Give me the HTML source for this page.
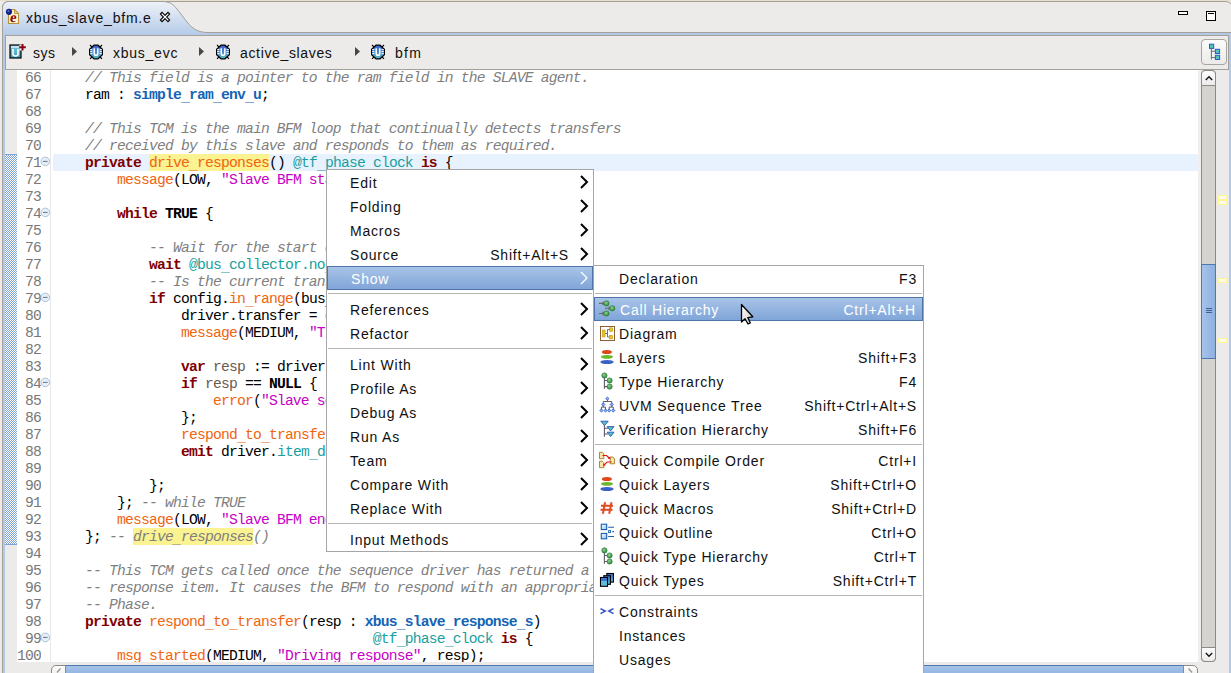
<!DOCTYPE html>
<html><head><meta charset="utf-8">
<style>
*{margin:0;padding:0;box-sizing:border-box}
html,body{width:1231px;height:673px;overflow:hidden;background:#ecebe9;font-family:"Liberation Sans",sans-serif;position:relative}
.a{position:absolute}
/* code */
#code{position:absolute;left:53px;top:69px;width:1145px;height:593px;overflow:hidden;font-family:"Liberation Mono",monospace;font-size:14.667px;letter-spacing:-0.8px;line-height:17px;color:#000}
#code div{height:17px;padding-top:1px;white-space:pre}
#nums{position:absolute;left:17px;top:69px;width:24px;height:593px;overflow:hidden;font-family:"Liberation Mono",monospace;font-size:14.667px;letter-spacing:-0.8px;line-height:17px;white-space:pre;color:#787878;text-align:right}
#nums div{height:17px;padding-top:1px}
.c{color:#7f7f7f;font-style:italic}
.k{color:#7f0000;font-weight:bold}
.b{font-weight:bold}
.t{color:#1464b4;font-weight:bold}
.m{color:#f0640e}
.s{color:#c800c8}
.e{color:#18a0a0}
.v{color:#6a5a50}
.hl{background:#fbf291;padding-top:1px}
.u{font-style:inherit;position:relative;top:2px}
/* menus */
.menu{position:absolute;background:#fff;border:1px solid #a6a6a6;font-size:14px;letter-spacing:0.8px;color:#101010}
.mi{position:absolute;left:0;right:0;height:24px;line-height:24px}
.mi .l{position:absolute;left:23px;top:1px}
.mi .r{position:absolute;right:24px;top:1px}
.sep{position:absolute;left:1px;right:1px;height:1px;background:#b4b4b4}
.sel{background:linear-gradient(#a8c4e8,#80a5d8);border:1px solid #4f74a8;color:#fff;line-height:22px}
.chev{position:absolute;left:253px;top:5px}
</style></head><body>

<!-- tab bar -->
<div class="a" style="left:0;top:0;width:1231px;height:1px;background:#e6e0cc"></div>
<svg class="a" style="left:0;top:0" width="1231" height="36">
  <defs>
    <linearGradient id="tabg" x1="0" y1="0" x2="0" y2="1">
      <stop offset="0" stop-color="#eef2f9"/>
      <stop offset="1" stop-color="#b3c9e7"/>
    </linearGradient>
  </defs>
  <path d="M2.5,36 L2.5,8 Q2.5,1.5 9,1.5 L1225,1.5 Q1232.5,1.5 1232.5,9 L1232.5,36" fill="#ecebe9" stroke="#a39f99" stroke-width="1"/>
  
  <rect x="3" y="33" width="1228" height="3" fill="#b3c9e7"/>
  <path d="M2.5,36 L2.5,8 Q2.5,1.5 9,1.5 L162,1.5 C169,1.5 173,4 177,9 L187,22 C193,29.5 199,32.5 208,32.5 L207,36 Z" fill="url(#tabg)"/>
  <path d="M2.5,36 L2.5,8 Q2.5,1.5 9,1.5 L162,1.5 C169,1.5 173,4 177,9 L187,22 C193,29.5 199,32.5 208,32.5 L1231,32.5" fill="none" stroke="#a39f99" stroke-width="1"/>
</svg>
<!-- tab icon -->
<svg class="a" style="left:4px;top:6px" width="18" height="20" viewBox="0 0 18 20">
  <path d="M4.5,3.5 L10.5,3.5 L14.5,7.5 L14.5,17.5 L4.5,17.5 Z" fill="#fdf4cf" stroke="#b8923a" stroke-width="1.1"/>
  <path d="M10.5,3.5 L10.5,7.5 L14.5,7.5 Z" fill="#e9cf8a" stroke="#b8923a" stroke-width="0.9"/>
  <text x="5.6" y="16.2" font-family="Liberation Serif" font-weight="bold" font-size="14.5" fill="#880606" transform="skewX(-8) translate(2.2,0)">e</text>
  <circle cx="5" cy="5.8" r="3.1" fill="#10208a"/>
  <circle cx="4.4" cy="5.2" r="1.1" fill="#6070b0"/>
</svg>
<div class="a" style="left:26px;top:10px;font-size:14px;letter-spacing:0.8px;color:#101010">xbus_slave_bfm.e</div>
<!-- close x -->
<svg class="a" style="left:158px;top:10px" width="14" height="14" viewBox="0 0 14 14">
  <path d="M4,4 L10,10 M10,4 L4,10" stroke="#000" stroke-width="3.4" stroke-linecap="square"/>
  <path d="M4,4 L10,10 M10,4 L4,10" stroke="#fff" stroke-width="1.2" stroke-linecap="square"/>
</svg>
<!-- min / max -->
<div class="a" style="left:1178px;top:11px;width:10px;height:4px;border:1.5px solid #000;background:#fff"></div>
<div class="a" style="left:1206px;top:11px;width:10px;height:10px;border:1.5px solid #000;background:#fff;box-shadow:inset 0 2px 0 -0.5px #fff"></div>
<div class="a" style="left:1208px;top:13px;width:6px;height:1px;background:#000"></div>

<!-- frame left/right -->
<div class="a" style="left:2px;top:8px;width:1px;height:665px;background:#a39f99"></div>
<div class="a" style="left:3px;top:33px;width:2px;height:640px;background:#b3c9e7"></div>
<div class="a" style="left:1229px;top:33px;width:2px;height:640px;background:#b3c9e7"></div>

<!-- breadcrumb -->
<div class="a" style="left:5px;top:35px;width:1224px;height:35px;border:1px solid #a39f99;background:#ecebe9"></div>
<svg class="a" style="left:8px;top:43px" width="18" height="17" viewBox="0 0 18 17">
  <defs><linearGradient id="ug" x1="0" y1="0" x2="0" y2="1"><stop offset="0" stop-color="#7fc8e0"/><stop offset="1" stop-color="#3c9ab8"/></linearGradient></defs>
  <rect x="2" y="2" width="11" height="13" fill="url(#ug)" stroke="#000" stroke-width="1.2"/>
  <rect x="3" y="3" width="9" height="2" fill="#bfe3ef"/>
  <path d="M5,6 L5,11 Q5,13 7.5,13 Q10,13 10,11 L10,6" fill="none" stroke="#fff" stroke-width="1.6"/>
  <rect x="11.5" y="1.5" width="6.5" height="6" fill="#ecebe9"/>
  <path d="M14.5,1 L14.5,7.5 M11.2,4.2 L17.8,4.2" stroke="#8a0010" stroke-width="2"/>
</svg>
<svg width="0" height="0" style="position:absolute"><defs><linearGradient id="bg1" x1="0" y1="0" x2="0" y2="1"><stop offset="0" stop-color="#3a5fd2"/><stop offset="1" stop-color="#5cbcc6"/></linearGradient></defs></svg>
<div class="a" style="left:33px;top:44.5px;font-size:14px;letter-spacing:0.5px;color:#101010">sys</div>

<svg class="a" style="left:72px;top:47px" width="6" height="10"><path d="M0,0 L5,4.5 L0,9 Z" fill="#474747"/></svg>
<svg class="a" style="left:199px;top:47px" width="6" height="10"><path d="M0,0 L5,4.5 L0,9 Z" fill="#474747"/></svg>
<svg class="a" style="left:355px;top:47px" width="6" height="10"><path d="M0,0 L5,4.5 L0,9 Z" fill="#474747"/></svg>

<svg class="a" style="left:88px;top:44px" width="16" height="16" viewBox="0 0 16 16">
  <path d="M2,1 L4.8,3.8 M14,1 L11.2,3.8 M2,14.8 L4.8,12 M14,14.8 L11.2,12" stroke="#000" stroke-width="1.1"/>
  <path d="M6,1.2 L10,1.2 L13,4 L14.4,5.2 L14.4,10.8 L13,12 L10,14.8 L6,14.8 L3,12 L1.6,10.8 L1.6,5.2 L3,4 Z" fill="url(#bg1)" stroke="#000" stroke-width="1.2"/>
  <path d="M2.2,5.6 L4.4,5.6 M2.2,7.6 L4.4,7.6 M2.2,9.6 L4.4,9.6 M11.6,5.6 L13.8,5.6 M11.6,7.6 L13.8,7.6 M11.6,9.6 L13.8,9.6" stroke="#fff" stroke-width="1"/>
  <path d="M6.2,4.3 L6.2,9.2 Q6.2,11.3 8,11.3 Q9.8,11.3 9.8,9.2 L9.8,4.3" fill="none" stroke="#fff" stroke-width="1.5"/>
</svg>
<div class="a" style="left:113px;top:44.5px;font-size:14px;letter-spacing:0.75px;color:#101010">xbus_evc</div>
<svg class="a" style="left:215px;top:44px" width="16" height="16" viewBox="0 0 16 16">
  <path d="M2,1 L4.8,3.8 M14,1 L11.2,3.8 M2,14.8 L4.8,12 M14,14.8 L11.2,12" stroke="#000" stroke-width="1.1"/>
  <path d="M6,1.2 L10,1.2 L13,4 L14.4,5.2 L14.4,10.8 L13,12 L10,14.8 L6,14.8 L3,12 L1.6,10.8 L1.6,5.2 L3,4 Z" fill="url(#bg1)" stroke="#000" stroke-width="1.2"/>
  <path d="M2.2,5.6 L4.4,5.6 M2.2,7.6 L4.4,7.6 M2.2,9.6 L4.4,9.6 M11.6,5.6 L13.8,5.6 M11.6,7.6 L13.8,7.6 M11.6,9.6 L13.8,9.6" stroke="#fff" stroke-width="1"/>
  <path d="M6.2,4.3 L6.2,9.2 Q6.2,11.3 8,11.3 Q9.8,11.3 9.8,9.2 L9.8,4.3" fill="none" stroke="#fff" stroke-width="1.5"/>
</svg>
<div class="a" style="left:240px;top:44.5px;font-size:14px;letter-spacing:0.65px;color:#101010">active_slaves</div>
<svg class="a" style="left:370px;top:44px" width="16" height="16" viewBox="0 0 16 16">
  <path d="M2,1 L4.8,3.8 M14,1 L11.2,3.8 M2,14.8 L4.8,12 M14,14.8 L11.2,12" stroke="#000" stroke-width="1.1"/>
  <path d="M6,1.2 L10,1.2 L13,4 L14.4,5.2 L14.4,10.8 L13,12 L10,14.8 L6,14.8 L3,12 L1.6,10.8 L1.6,5.2 L3,4 Z" fill="url(#bg1)" stroke="#000" stroke-width="1.2"/>
  <path d="M2.2,5.6 L4.4,5.6 M2.2,7.6 L4.4,7.6 M2.2,9.6 L4.4,9.6 M11.6,5.6 L13.8,5.6 M11.6,7.6 L13.8,7.6 M11.6,9.6 L13.8,9.6" stroke="#fff" stroke-width="1"/>
  <path d="M6.2,4.3 L6.2,9.2 Q6.2,11.3 8,11.3 Q9.8,11.3 9.8,9.2 L9.8,4.3" fill="none" stroke="#fff" stroke-width="1.5"/>
</svg>
<div class="a" style="left:395px;top:44.5px;font-size:14px;letter-spacing:1.3px;color:#101010">bfm</div>

<!-- breadcrumb right button -->
<div class="a" style="left:1201px;top:39px;width:26px;height:26px;border:1px solid #a8a49e;border-radius:4px;background:linear-gradient(#fbfbfa,#ecebe9)"></div>
<svg class="a" style="left:1205px;top:42px" width="18" height="20" viewBox="0 0 18 20">
  <path d="M6.4,6.5 L6.4,17.5 M6.4,9.3 L10.5,9.3 M6.4,15.5 L10.5,15.5" stroke="#6a7482" stroke-width="1.1"/>
  <rect x="4.5" y="2.2" width="4.2" height="4.2" fill="#52c2b4" stroke="#2f58d0" stroke-width="1"/>
  <rect x="10.4" y="7.3" width="4.2" height="4.2" fill="#52c2b4" stroke="#2f58d0" stroke-width="1"/>
  <rect x="10.4" y="13.3" width="4.2" height="4.2" fill="#52c2b4" stroke="#2f58d0" stroke-width="1"/>
</svg>

<!-- editor -->
<div class="a" style="left:5px;top:70px;width:12px;height:592px;background:#ecebe9"></div>
<svg class="a" style="left:5px;top:154px" width="12" height="391">
  <defs><pattern id="dots" width="2" height="2" patternUnits="userSpaceOnUse"><rect width="2" height="2" fill="#ffffff"/><rect width="1" height="1" fill="#7ea3d8"/><rect x="1" y="1" width="1" height="1" fill="#7ea3d8"/></pattern></defs>
  <rect width="12" height="391" fill="url(#dots)"/>
  <rect width="12" height="1" fill="#7ea3d8"/><rect y="390" width="12" height="1" fill="#7ea3d8"/>
</svg>
<div class="a" style="left:17px;top:70px;width:1181px;height:592px;background:#fff"></div>
<div class="a" style="left:50px;top:70px;width:1px;height:592px;background:#e8e8e8"></div>
<div class="a" style="left:53px;top:154px;width:1145px;height:17px;background:#e8f2fe"></div>

<div id="nums"><div>66</div><div>67</div><div>68</div><div>69</div><div>70</div><div>71</div><div>72</div><div>73</div><div>74</div><div>75</div><div>76</div><div>77</div><div>78</div><div>79</div><div>80</div><div>81</div><div>82</div><div>83</div><div>84</div><div>85</div><div>86</div><div>87</div><div>88</div><div>89</div><div>90</div><div>91</div><div>92</div><div>93</div><div>94</div><div>95</div><div>96</div><div>97</div><div>98</div><div>99</div><div>100</div></div>

<!-- fold icons -->
<svg class="a" style="left:40px;top:69px" width="11" height="593">
  <g fill="#e6eff8" stroke="#a8bccf" stroke-width="0.9"><circle cx="5.3" cy="92.4" r="4.3"/><circle cx="5.3" cy="143.4" r="4.3"/><circle cx="5.3" cy="228.4" r="4.3"/><circle cx="5.3" cy="313.4" r="4.3"/><circle cx="5.3" cy="568.4" r="4.3"/></g>
  <path d="M3,92.4 L7.6,92.4 M3,143.4 L7.6,143.4 M3,228.4 L7.6,228.4 M3,313.4 L7.6,313.4 M3,568.4 L7.6,568.4" stroke="#61778c" stroke-width="1"/>
</svg>

<div id="code">
<div>    <span class="c">// This field is a pointer to the ram field in the SLAVE agent.</span></div>
<div>    ram : <span class="t">simple<i class="u">_</i>ram<i class="u">_</i>env<i class="u">_</i>u</span>;</div>
<div> </div>
<div>    <span class="c">// This TCM is the main BFM loop that continually detects transfers</span></div>
<div>    <span class="c">// received by this slave and responds to them as required.</span></div>
<div>    <span class="k">private</span> <span class="m hl">drive<i class="u">_</i>responses</span>() <span class="e">@tf<i class="u">_</i>phase<i class="u">_</i>clock</span> <span class="k">is</span> {</div>
<div>        <span class="m">message</span>(LOW, <span class="s">"Slave BFM started"</span>);</div>
<div> </div>
<div>        <span class="k">while</span> <span class="b">TRUE</span> {</div>
<div> </div>
<div>            <span class="c">-- Wait for the start of a transfer</span></div>
<div>            <span class="k">wait</span> <span class="e">@bus<i class="u">_</i>collector.no<i class="u">_</i>transfer</span>;</div>
<div>            <span class="c">-- Is the current transfer for us?</span></div>
<div>            <span class="k">if</span> config.<span class="m">in<i class="u">_</i>range</span>(bus<i class="u">_</i>collector.transfer.addr) {</div>
<div>                driver.transfer = <span class="m">copy</span>();</div>
<div>                <span class="m">message</span>(MEDIUM, <span class="s">"Transfer"</span>);</div>
<div> </div>
<div>                <span class="k">var</span> <span class="v">resp</span> := driver.get<i class="u">_</i>response();</div>
<div>                <span class="k">if</span> <span class="v">resp</span> == <span class="b">NULL</span> {</div>
<div>                    <span class="m">error</span>(<span class="s">"Slave sequence"</span>);</div>
<div>                };</div>
<div>                <span class="m">respond<i class="u">_</i>to<i class="u">_</i>transfer</span>(resp);</div>
<div>                <span class="k">emit</span> driver.<span class="e">item<i class="u">_</i>done</span>;</div>
<div> </div>
<div>            };</div>
<div>        }; <span class="c">-- while TRUE</span></div>
<div>        <span class="m">message</span>(LOW, <span class="s">"Slave BFM ended"</span>);</div>
<div>    }; <span class="c">-- <span class="hl">drive<i class="u">_</i>responses</span>()</span></div>
<div> </div>
<div>    <span class="c">-- This TCM gets called once the sequence driver has returned a</span></div>
<div>    <span class="c">-- response item. It causes the BFM to respond with an appropriate</span></div>
<div>    <span class="c">-- Phase.</span></div>
<div>    <span class="k">private</span> <span class="m">respond<i class="u">_</i>to<i class="u">_</i>transfer</span>(resp : <span class="t">xbus<i class="u">_</i>slave<i class="u">_</i>response<i class="u">_</i>s</span>)</div>
<div>                                        <span class="e">@tf<i class="u">_</i>phase<i class="u">_</i>clock</span> <span class="k">is</span> {</div>
<div>        <span class="m">msg<i class="u">_</i>started</span>(MEDIUM, <span class="s">"Driving response"</span>, resp);</div>
</div>

<!-- vertical scrollbar -->
<div class="a" style="left:1198px;top:70px;width:3px;height:592px;background:#f0efee"></div>
<div class="a" style="left:1216px;top:70px;width:13px;height:603px;background:#ecebe9"></div>
<div class="a" style="left:1201px;top:70px;width:15px;height:592px;background:#d5d3d0;border:1px solid #8e8a86;border-radius:4px"></div>
<div class="a" style="left:1201px;top:70px;width:15px;height:16px;background:linear-gradient(#fdfdfd,#ecebea);border:1px solid #8e8a86;border-radius:4px 4px 0 0"></div>
<svg class="a" style="left:1204px;top:74px" width="10" height="8"><path d="M1.8,6 L5,2.8 L8.2,6" fill="none" stroke="#1a1a1a" stroke-width="1.5"/></svg>
<div class="a" style="left:1201px;top:647px;width:15px;height:15px;background:linear-gradient(#fdfdfd,#ecebea);border:1px solid #8e8a86;border-radius:0 0 4px 4px"></div>
<svg class="a" style="left:1204px;top:651px" width="10" height="8"><path d="M1.8,2 L5,5.2 L8.2,2" fill="none" stroke="#1a1a1a" stroke-width="1.5"/></svg>
<div class="a" style="left:1201px;top:264px;width:15px;height:95px;background:linear-gradient(90deg,#a6c3ea,#8eb1e0);border:1px solid #4f78ad"></div>
<div class="a" style="left:1206px;top:308px;width:6px;height:1px;background:#3f5f8f"></div>
<div class="a" style="left:1206px;top:310px;width:6px;height:1px;background:#3f5f8f"></div>
<div class="a" style="left:1206px;top:312px;width:6px;height:1px;background:#3f5f8f"></div>
<!-- overview markers -->
<div class="a" style="left:1218px;top:195px;width:9px;height:5px;border:1.5px solid #fcf49a;background:#fffbe6"></div>
<div class="a" style="left:1218px;top:200px;width:9px;height:5px;border:1.5px solid #fcf49a;background:#fffbe6"></div>
<div class="a" style="left:1218px;top:278px;width:9px;height:5px;border:1.5px solid #fcf49a;background:#fffbe6"></div>
<div class="a" style="left:1218px;top:338px;width:9px;height:5px;border:1.5px solid #fcf49a;background:#fffbe6"></div>

<!-- horizontal scrollbar -->
<div class="a" style="left:64px;top:665px;width:1121px;height:12px;background:linear-gradient(#a6c3ea,#8eb1e0);border:1px solid #4f78ad"></div>
<div class="a" style="left:51px;top:665px;width:15px;height:12px;background:linear-gradient(#fdfdfd,#efeeed);border:1px solid #8e8a86;border-radius:5px 0 0 0"></div>
<div class="a" style="left:1183px;top:665px;width:15px;height:12px;background:linear-gradient(#fdfdfd,#efeeed);border:1px solid #8e8a86;border-radius:0 5px 0 0"></div>
<svg class="a" style="left:51px;top:665px" width="15" height="8"><path d="M9.5,3.5 L6,7.5" stroke="#9a9896" stroke-width="1.3" fill="none"/></svg>
<svg class="a" style="left:1183px;top:665px" width="15" height="8"><path d="M5.5,3.5 L9,7.5" stroke="#9a9896" stroke-width="1.3" fill="none"/></svg>

<!-- main context menu -->
<div class="menu" style="left:326px;top:169px;width:268px;height:383px">
  <div class="mi" style="top:0"><span class="l">Edit</span></div>
  <div class="mi" style="top:24px"><span class="l">Folding</span></div>
  <div class="mi" style="top:48px"><span class="l">Macros</span></div>
  <div class="mi" style="top:72px"><span class="l">Source</span><span class="r">Shift+Alt+S</span></div>
  <div class="mi sel" style="top:96px"><span class="l">Show</span></div>
  <div class="sep" style="top:123px"></div>
  <div class="mi" style="top:127px"><span class="l">References</span></div>
  <div class="mi" style="top:151px"><span class="l">Refactor</span></div>
  <div class="sep" style="top:178px"></div>
  <div class="mi" style="top:182px"><span class="l">Lint With</span></div>
  <div class="mi" style="top:206px"><span class="l">Profile As</span></div>
  <div class="mi" style="top:230px"><span class="l">Debug As</span></div>
  <div class="mi" style="top:254px"><span class="l">Run As</span></div>
  <div class="mi" style="top:278px"><span class="l">Team</span></div>
  <div class="mi" style="top:302px"><span class="l">Compare With</span></div>
  <div class="mi" style="top:326px"><span class="l">Replace With</span></div>
  <div class="sep" style="top:353px"></div>
  <div class="mi" style="top:357px"><span class="l">Input Methods</span></div>
</div>
<svg class="a" style="left:326px;top:169px" width="269" height="384">
  <g fill="none" stroke="#000" stroke-width="2">
    <path d="M255,7 L261,13 L255,19"/>
    <path d="M255,31 L261,37 L255,43"/>
    <path d="M255,55 L261,61 L255,67"/>
    <path d="M255,79 L261,85 L255,91"/>
    <path d="M255,134 L261,140 L255,146"/>
    <path d="M255,158 L261,164 L255,170"/>
    <path d="M255,189 L261,195 L255,201"/>
    <path d="M255,213 L261,219 L255,225"/>
    <path d="M255,237 L261,243 L255,249"/>
    <path d="M255,261 L261,267 L255,273"/>
    <path d="M255,285 L261,291 L255,297"/>
    <path d="M255,309 L261,315 L255,321"/>
    <path d="M255,333 L261,339 L255,345"/>
    <path d="M255,364 L261,370 L255,376"/>
  </g>
  <path d="M255,103 L261,109 L255,115" fill="none" stroke="#fff" stroke-width="1.3"/>
</svg>

<!-- submenu -->
<div class="menu" style="left:593px;top:265px;width:331px;height:420px">
  <div class="mi" style="top:0"><span class="l" style="left:25px">Declaration</span><span class="r" style="right:6px">F3</span></div>
  <div class="sep" style="top:27px"></div>
  <div class="mi sel" style="top:31px"><span class="l" style="left:25px">Call Hierarchy</span><span class="r" style="right:6px">Ctrl+Alt+H</span></div>
  <div class="mi" style="top:55px"><span class="l" style="left:25px">Diagram</span></div>
  <div class="mi" style="top:79px"><span class="l" style="left:25px">Layers</span><span class="r" style="right:6px">Shift+F3</span></div>
  <div class="mi" style="top:103px"><span class="l" style="left:25px">Type Hierarchy</span><span class="r" style="right:6px">F4</span></div>
  <div class="mi" style="top:127px"><span class="l" style="left:25px">UVM Sequence Tree</span><span class="r" style="right:6px">Shift+Ctrl+Alt+S</span></div>
  <div class="mi" style="top:151px"><span class="l" style="left:25px">Verification Hierarchy</span><span class="r" style="right:6px">Shift+F6</span></div>
  <div class="sep" style="top:178px"></div>
  <div class="mi" style="top:182px"><span class="l" style="left:25px">Quick Compile Order</span><span class="r" style="right:6px">Ctrl+I</span></div>
  <div class="mi" style="top:206px"><span class="l" style="left:25px">Quick Layers</span><span class="r" style="right:6px">Shift+Ctrl+O</span></div>
  <div class="mi" style="top:230px"><span class="l" style="left:25px">Quick Macros</span><span class="r" style="right:6px">Shift+Ctrl+D</span></div>
  <div class="mi" style="top:254px"><span class="l" style="left:25px">Quick Outline</span><span class="r" style="right:6px">Ctrl+O</span></div>
  <div class="mi" style="top:278px"><span class="l" style="left:25px">Quick Type Hierarchy</span><span class="r" style="right:6px">Ctrl+T</span></div>
  <div class="mi" style="top:302px"><span class="l" style="left:25px">Quick Types</span><span class="r" style="right:6px">Shift+Ctrl+T</span></div>
  <div class="sep" style="top:329px"></div>
  <div class="mi" style="top:333px"><span class="l" style="left:25px">Constraints</span></div>
  <div class="mi" style="top:357px"><span class="l" style="left:25px">Instances</span></div>
  <div class="mi" style="top:381px"><span class="l" style="left:25px">Usages</span></div>
</div>


<!-- submenu icons -->
<svg class="a" style="left:594px;top:265px" width="329" height="408">
<defs>
  <radialGradient id="gc" cx="0.4" cy="0.35" r="0.65"><stop offset="0" stop-color="#8fd08f"/><stop offset="1" stop-color="#2f8f3f"/></radialGradient>
  <linearGradient id="qt" x1="0" y1="0" x2="0" y2="1"><stop offset="0" stop-color="#3a6fd0"/><stop offset="1" stop-color="#5cc3dc"/></linearGradient>
  <linearGradient id="ol" x1="0" y1="0" x2="1" y2="1"><stop offset="0" stop-color="#ffffff"/><stop offset="1" stop-color="#8cc4f0"/></linearGradient>
</defs>
<g transform="translate(-594,-265)">
  <!-- call hierarchy -->
  <g stroke="#6a6a6a" stroke-width="1.1" fill="none">
    <path d="M599,303.4 L604,303.4 M605,308.3 L610,308.3 M599,313.5 L604,313.5"/>
    <path d="M602.5,301.8 L604,303.4 L602.5,305 M608.5,306.7 L610,308.3 L608.5,309.9 M602.5,311.9 L604,313.5 L602.5,315.1"/>
  </g>
  <g fill="url(#gc)" stroke="#2a7a3a" stroke-width="0.7">
    <circle cx="606.4" cy="303.4" r="2.6"/><circle cx="612.3" cy="308.3" r="2.6"/><circle cx="606.4" cy="313.5" r="2.6"/>
  </g>
  <!-- diagram -->
  <rect x="600.5" y="326.5" width="14" height="14" fill="#fff" stroke="#8e5f34" stroke-width="1"/>
  <path d="M605,333.5 L607.5,333.5 M607.5,329.5 L607.5,337 M607.5,329.5 L610,329.5 M607.5,337 L610,337" stroke="#707070" stroke-width="1" fill="none"/>
  <rect x="602.3" y="330" width="2.8" height="7" fill="#e8c020" stroke="#b89010" stroke-width="0.5"/>
  <rect x="609.6" y="327.8" width="3" height="3.6" fill="#e8c020" stroke="#b89010" stroke-width="0.5"/>
  <rect x="609.6" y="335.3" width="3" height="3.6" fill="#e8c020" stroke="#b89010" stroke-width="0.5"/>
  <!-- layers -->
  <ellipse cx="606.9" cy="351.9" rx="5" ry="2" fill="#e0461a"/>
  <ellipse cx="607" cy="356.8" rx="6" ry="1.9" fill="#6ab828"/>
  <ellipse cx="607" cy="362" rx="6.7" ry="2.1" fill="#3a62c6"/>
  <!-- type hierarchy -->
  <path d="M604.4,376 L604.4,388.8 M604.4,380.5 L608,380.5 M604.4,386.6 L608,386.6" stroke="#5c5c6c" stroke-width="1.1" fill="none"/>
  <g fill="url(#gc)" stroke="#2a7a3a" stroke-width="0.7">
    <circle cx="604.4" cy="375.5" r="2.6"/><circle cx="609.6" cy="380.5" r="2.6"/><circle cx="609.6" cy="386.6" r="2.6"/>
  </g>
  <!-- uvm sequence tree -->
  <path d="M607.4,398.6 L607.4,401.5 M603.3,404.5 L603.3,401.5 L611.7,401.5 L611.7,404.5 M603.3,404.5 L603.3,407.1 M601.4,410.5 L601.4,407.1 L605.5,407.1 L605.5,410.5 M611.7,404.5 L611.7,407.1 M609.2,410.5 L609.2,407.1 L613.3,407.1 L613.3,410.5" stroke="#5c5c6c" stroke-width="1" fill="none"/>
  <g fill="#8fb0f0" stroke="#3a66d0" stroke-width="0.9"><path d="M607.4,397.0 L609.0,398.6 L607.4,400.20000000000005 L605.8,398.6 Z"/><path d="M603.3,402.9 L604.9,404.5 L603.3,406.1 L601.6999999999999,404.5 Z"/><path d="M611.7,402.9 L613.3000000000001,404.5 L611.7,406.1 L610.1,404.5 Z"/><path d="M601.4,408.9 L603.0,410.5 L601.4,412.1 L599.8,410.5 Z"/><path d="M605.5,408.9 L607.1,410.5 L605.5,412.1 L603.9,410.5 Z"/><path d="M609.2,408.9 L610.8000000000001,410.5 L609.2,412.1 L607.6,410.5 Z"/><path d="M613.3,408.9 L614.9,410.5 L613.3,412.1 L611.6999999999999,410.5 Z"/></g>
  <!-- verification hierarchy -->
  <path d="M604.4,425 L604.4,436.8 M604.4,428.3 L608,428.3 M604.4,434 L608,434" stroke="#5c5c6c" stroke-width="1.1" fill="none"/>
  <g fill="#58c4b4" stroke="#2a52c0" stroke-width="0.9">
    <path d="M600.8,421.2 L608.2,421.2 L604.5,425.6 Z"/>
    <path d="M607.2,426.6 L614,426.6 L610.6,431 Z"/>
    <path d="M607.2,432.2 L614,432.2 L610.6,436.6 Z"/>
  </g>
  <!-- quick compile order -->
  <g fill="#f6e6a6" stroke="#a07c2c" stroke-width="0.9">
    <path d="M599.5,452.3 L602.3,452.3 L603.8,453.8 L603.8,458.7 L599.5,458.7 Z"/>
    <path d="M610.2,457 L613,457 L614.6,458.6 L614.6,463.8 L610.2,463.8 Z"/>
    <path d="M599.5,461.2 L602.3,461.2 L603.8,462.7 L603.8,467.6 L599.5,467.6 Z"/>
  </g>
  <path d="M602.5,455.5 L606.5,455.5 L609.8,458.5 M611.5,462 L607,462 L603.8,465.3" stroke="#e81010" stroke-width="1.1" fill="none"/>
  <path d="M607.8,458.8 L610.3,459 L610,456.4 Z M605.3,465.5 L603.2,465.8 L603.4,463.4 Z" fill="#e81010"/>
  <!-- quick layers -->
  <ellipse cx="606.9" cy="478.9" rx="5" ry="2" fill="#e0461a"/>
  <ellipse cx="607" cy="483.8" rx="6" ry="1.9" fill="#6ab828"/>
  <ellipse cx="607" cy="489" rx="6.7" ry="2.1" fill="#3a62c6"/>
  <!-- quick macros # -->
  <path d="M605.1,502.2 L602.9,513.8 M611.5,502.2 L609.2,513.8 M601,505.7 L613,505.7 M600.5,509.8 L612.5,509.8" stroke="#e24a22" stroke-width="2" fill="none"/>
  <!-- quick outline -->
  <rect x="601.3" y="524.2" width="5.4" height="5.4" fill="url(#ol)" stroke="#1a5fb4" stroke-width="1.1"/>
  <rect x="601.3" y="533.4" width="5.4" height="5.4" fill="url(#ol)" stroke="#1a5fb4" stroke-width="1.1"/>
  <path d="M608.2,527.2 L614,527.2 M608.2,536.5 L614,536.5 M612.3,531.6 L614,531.6" stroke="#1a5fb4" stroke-width="1.1"/>
  <rect x="608.6" y="530.6" width="2" height="2" fill="none" stroke="#1a5fb4" stroke-width="0.9"/>
  <!-- quick type hierarchy -->
  <path d="M604.4,551 L604.4,563.7 M604.4,555.5 L608,555.5 M604.4,561.5 L608,561.5" stroke="#5c5c6c" stroke-width="1.1" fill="none"/>
  <g fill="url(#gc)" stroke="#2a7a3a" stroke-width="0.7">
    <circle cx="604.4" cy="550.4" r="2.6"/><circle cx="609.6" cy="555.5" r="2.6"/><circle cx="609.6" cy="561.5" r="2.6"/>
  </g>
  <!-- quick types -->
  <rect x="606.8" y="573.5" width="6.6" height="8.6" fill="url(#qt)" stroke="#000" stroke-width="1.1"/>
  <rect x="603.8" y="575.7" width="6.6" height="8.6" fill="url(#qt)" stroke="#000" stroke-width="1.1"/>
  <rect x="600.5" y="577.5" width="7" height="8.8" fill="#5cc0d8" stroke="#000" stroke-width="1.1"/>
  <rect x="601.1" y="578.1" width="5.8" height="2.8" fill="#3a6fd0"/>
  <!-- constraints -->
  <path d="M600.5,608.6 L605.2,611.1 L600.5,613.6 M613.5,608.6 L608.8,611.1 L613.5,613.6" stroke="#3050c0" stroke-width="1.5" fill="none"/>
</g>
</svg>
<!-- mouse cursor -->
<svg class="a" style="left:736px;top:300px" width="22" height="28">
  <defs><linearGradient id="cur" x1="0" y1="0" x2="1" y2="1"><stop offset="0" stop-color="#ffffff"/><stop offset="1" stop-color="#c8c8c8"/></linearGradient></defs>
  <g transform="translate(-736,-300)">
  <path d="M741.5,304.5 L741.5,322 L745,318.8 L748,324 L750.3,323 L747.8,317.6 L752.8,316.8 Z" fill="url(#cur)" stroke="#000" stroke-width="1.3" stroke-linejoin="round"/>
  </g>
</svg>

</body></html>
